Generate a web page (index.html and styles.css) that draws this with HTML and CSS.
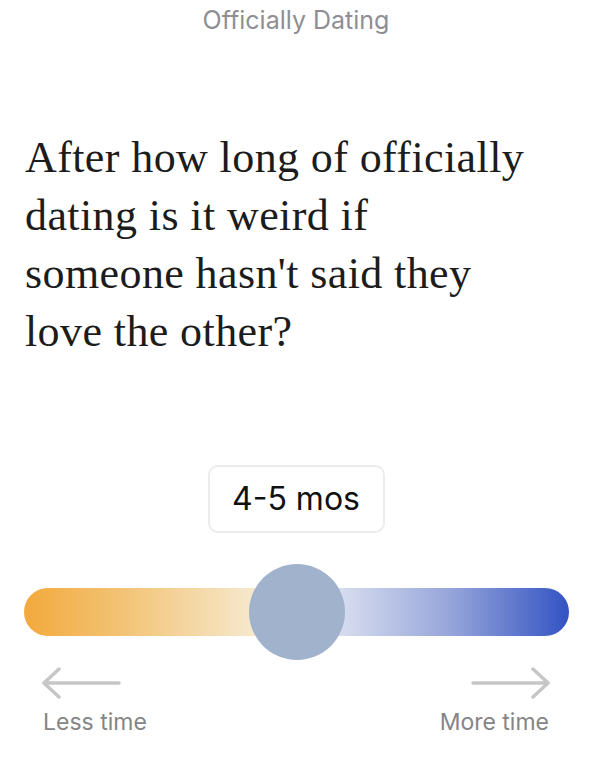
FILE: index.html
```html
<!DOCTYPE html>
<html lang="en">

<head>
    <meta charset="UTF-8">
    <meta name="viewport" content="width=device-width, initial-scale=1.0">
    <title>Officially Dating</title>
    <link rel="stylesheet" href="styles.css">
</head>

<body>
    <div class="screen">
        <header class="category">Officially Dating</header>

        <h1 class="question">
            After how long of officially<br>
            dating is it weird if<br>
            someone hasn't said they<br>
            love the other?
        </h1>

        <div class="answer">4-5 mos</div>

        <div class="slider">
            <div class="track"></div>
            <div class="knob"></div>
        </div>

        <div class="ends">
            <div class="end">
                <svg class="arrow" width="80" height="32" viewBox="0 0 80 32">
                    <path d="M3 16 H78 M18 2 L3 16 L18 30" />
                </svg>
                <span>Less time</span>
            </div>
            <div class="end end-right">
                <svg class="arrow" width="80" height="32" viewBox="0 0 80 32">
                    <path d="M2 16 H77 M62 2 L77 16 L62 30" />
                </svg>
                <span>More time</span>
            </div>
        </div>
    </div>
</body>

</html>
```

FILE: styles.css
```css
* {
    margin: 0;
    padding: 0;
    box-sizing: border-box;
}

body {
    font-family: Inter, "Noto Sans", sans-serif;
    background-color: #fff;
}

.screen {
    width: 592px;
    height: 772px;
    overflow: hidden;
}

.category {
    padding-top: 4px;
    text-align: center;
    font-size: 25px;
    line-height: 32px;
    color: #8e8e93;
}

.question {
    margin-top: 93px;
    padding: 0 25px;
    font-family: "Liberation Serif", serif;
    font-weight: normal;
    font-size: 44px;
    line-height: 58px;
    letter-spacing: 0.4px;
    color: #1c1c1c;
}

.answer {
    width: 177px;
    height: 68px;
    margin: 104px auto 0;
    border: 2px solid #ececec;
    border-radius: 10px;
    text-align: center;
    font-size: 32px;
    line-height: 64px;
    color: #111;
}

/* slider: gradient track with the thumb sitting over its middle */
.slider {
    position: relative;
    height: 96px;
    margin: 31px 23px 0 24px;
    display: flex;
    align-items: center;
}

.track {
    width: 100%;
    height: 48px;
    border-radius: 24px;
    background: linear-gradient(to right, #f2a93c 0%, #f3c67c 20%, #f6e6c9 41%, #f4f1f1 50%, #d4daee 59%, #97a6da 78%, #3353c4 100%);
}

.knob {
    position: absolute;
    left: 225px;
    top: 0;
    width: 96px;
    height: 96px;
    border-radius: 50%;
    background-color: #a1b2cd;
}

.ends {
    display: flex;
    justify-content: space-between;
    margin-top: 7px;
    padding: 0 41px 0 41px;
}

.end {
    display: flex;
    flex-direction: column;
    align-items: flex-start;
}

.end-right {
    align-items: flex-end;
}

.arrow path {
    fill: none;
    stroke: #c6c6c6;
    stroke-width: 3.5;
    stroke-linecap: round;
    stroke-linejoin: round;
}

.end span {
    margin-top: 9px;
    padding: 0 2px;
    font-size: 23px;
    line-height: 28px;
    color: #858585;
}
```
